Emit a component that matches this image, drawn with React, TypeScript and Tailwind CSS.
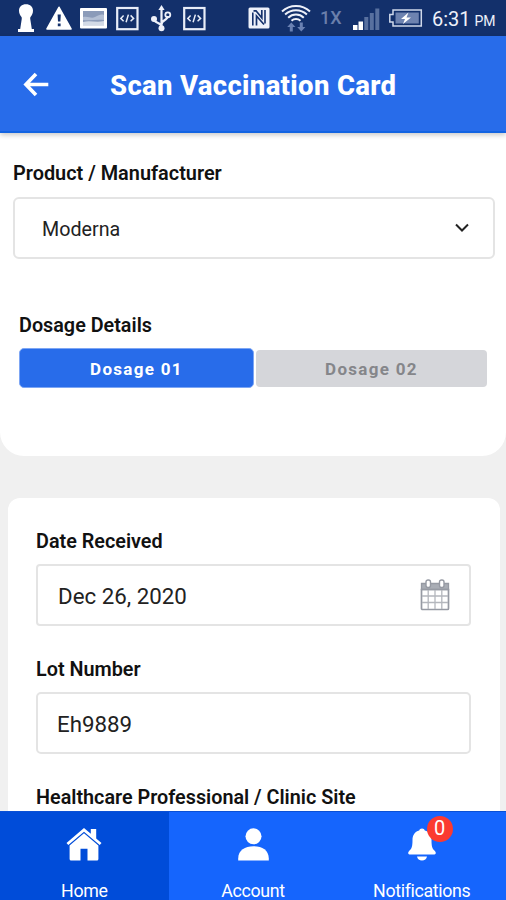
import { useState } from "react";

const dosages = ["Dosage 01", "Dosage 02"];

function CodeIcon() {
  return (
    <svg width="23" height="25" viewBox="0 0 23 25" fill="none" stroke="#e8edf8">
      <rect x="1.2" y="2" width="20.3" height="21.2" strokeWidth="2.2" />
      <path d="M7.6 9.4 4.8 12.4l2.8 2.8M14.6 9.4l3 3-3 2.8M12.4 8.6l-2.3 7.6" strokeWidth="1.5" />
    </svg>
  );
}

function StatusBar() {
  return (
    <div className="flex h-9 shrink-0 items-center bg-[#13306b] pl-[17px] text-[#eef1fa]">
      <svg width="18" height="30" viewBox="0 0 18 30" fill="#fff">
        <path d="M9 1.3C4.800 1.300 2 4 2 7.500c0 2.800 1 4.700 2.300 6.300.6.700.5 1.500.4 2.500L3.200 26H1v3h16v-3h-2.200l-1.500-9.700c-.1-1-.2-1.800.4-2.500C15 12.200 16 10.300 16 7.500c0-3.500-2.800-6.200-7-6.200Z" />
      </svg>
      <svg className="ml-[10px]" width="28" height="26" viewBox="0 0 28 26">
        <path d="M14 2.3 26 24H2Z" fill="#fff" stroke="#fff" strokeWidth="1.6" strokeLinejoin="round" />
        <path d="M12.6 9.5h3.2l-.4 7h-2.400ZM12.8 18.400h2.800v2.800h-2.800Z" fill="#13306b" />
      </svg>
      <svg className="ml-[7px]" width="28" height="22" viewBox="0 0 28 22">
        <rect x="0" y="1" width="27" height="20.5" rx="1" fill="#fff" />
        <rect x="3" y="4" width="21" height="14.3" fill="#8b9bb9" />
        <path d="M3 10c6-1 8 2 12 0s6-3 9-2v5c-7-1-14 1-21 0Z" fill="#b3bfd4" />
        <path d="M3 15c7-2 13 1 21-1v4.300H3Z" fill="#d3dae6" />
      </svg>
      <div className="ml-[8px]"><CodeIcon /></div>
      <svg className="ml-[11px]" width="23" height="28" viewBox="0 0 23 28" fill="none" stroke="#eef1fa">
        <path d="M11.5 4v20M4 15.500c0 3.500 7.500 3 7.500 7M17.800 12c-.3 5-6.300 3.500-6.300 8.500" strokeWidth="2.2" />
        <path d="M11.5 1 8.400 6h6.200Z" fill="#eef1fa" stroke="none" />
        <circle cx="4" cy="15" r="3" fill="#eef1fa" stroke="none" />
        <circle cx="17.8" cy="10.8" r="2.5" strokeWidth="1.8" />
        <circle cx="11.5" cy="24.2" r="3" fill="#eef1fa" stroke="none" />
      </svg>
      <div className="ml-[10px]"><CodeIcon /></div>

      {/* NFC */}
      <svg className="ml-[42px]" width="23" height="22" viewBox="0 0 23 22">
        <rect x="0.5" y="0.5" width="21" height="21" rx="1.5" fill="#eef1fa" />
        <path d="M4.800 18.500V5.500M17 16.500V3" stroke="#13306b" strokeWidth="1.600" />
        <path d="M8.500 18.500V9l7.500 8.500M5.500 3.800h2.500l5.800 7V3" fill="none" stroke="#13306b" strokeWidth="1.700" />
      </svg>
      <svg className="ml-[10px]" width="32" height="30" viewBox="0 0 32 30" fill="none" stroke="#eef1fa" strokeWidth="2">
        <path d="M1 8.500a20.500 20.500 0 0 1 28 0M4.100 11.600a16 16 0 0 1 21.800 0M7.200 14.700a11.300 11.300 0 0 1 15.600 0M10.500 17.800a6.700 6.700 0 0 1 9 0" />
        <path d="M10.300 19.500 6.200 24h2.600v4.500h3V24h2.600ZM20.300 28.500l-4.100-4.500h2.600v-4.500h3V24h2.600Z" fill="#6a81b3" stroke="none" />
      </svg>
      <span className="ml-[7px] w-[22px] text-[18px] font-medium leading-none text-[#6a7fab]">1X</span>
      <svg className="ml-[10px] mt-[2px]" width="28" height="24" viewBox="0 0 28 24">
        <path d="M1 18h4.500v5H1ZM6.500 14.500H11V23H6.500Z" fill="#fff" />
        <path d="M12.300 10h4v13h-4ZM17.800 6h4v17h-4ZM23.300 1.500h4V23h-4Z" fill="#58709f" />
      </svg>
      <svg className="ml-[8px]" width="35" height="20" viewBox="0 0 35 20">
        <path d="M5 2h28.300v16H5v-4H1.800V6.500H5Z" fill="none" stroke="#cfd8ea" strokeWidth="1.5" />
        <path d="M7.5 4.500h23.300v11H7.500Z" fill="#6e83b0" />
        <path d="m20.500 4.500-7.500 6.500h4L15 16l8-6.500h-4.500Z" fill="#fff" />
      </svg>
      <span className="ml-[9px] mt-[2px] whitespace-nowrap text-[20px] leading-none">
        6:31 <span className="-ml-[1px] text-[14px]">PM</span>
      </span>
    </div>
  );
}

function Header() {
  return (
    <header className="z-10 flex h-[97px] shrink-0 items-center border-b-2 border-[#1263e2] bg-[#286cea] text-white shadow-[0_2px_5px_rgba(0,0,0,0.22)]">
      <svg className="ml-[22px]" width="28" height="28" viewBox="0 0 28 28" fill="none" stroke="#fff" strokeWidth="3.6">
        <path d="M26.3 14.500H4.500M14 4 3.900 14.500 14 25" />
      </svg>
      <h1 className="ml-[60px] mt-[5px] whitespace-nowrap text-[27.5px] font-extrabold leading-none tracking-[0.33px]">Scan Vaccination Card</h1>
    </header>
  );
}

function CalendarIcon() {
  return (
    <svg width="30" height="32" viewBox="0 0 30 32" fill="none" stroke="#969aa3">
      <path d="M1.5 4.500h27v6h-27Z" fill="#a9adb5" strokeWidth="1.3" />
      <path d="M1.5 10.500h27V29.500a1 1 0 0 1-1 1h-25a1 1 0 0 1-1-1Z" strokeWidth="1.7" />
      <path d="M8.2 11v19M15 11v19M21.800 11v19M2 17h26M2 23.500h26" stroke="#b4b7bd" strokeWidth="1.3" />
      <rect x="6" y="1" width="4.5" height="7.5" rx="2" fill="#fff" strokeWidth="1.4" />
      <rect x="19.5" y="1" width="4.5" height="7.5" rx="2" fill="#fff" strokeWidth="1.4" />
    </svg>
  );
}

function BottomNav() {
  return (
    <nav className="grid h-[89px] shrink-0 grid-cols-3 border-t border-[#0a50d5] bg-[#1565fd] text-[17.8px] leading-none tracking-[-0.35px] text-white">
      <div className="flex flex-col items-center bg-[#004cd9] pt-[15px]">
        <svg width="36" height="34" viewBox="0 0 36 34" fill="#fff">
          <path d="M18 1 .5 16l1.800 2L18 4.700 33.700 18l1.800-2-5.300-4.600V2h-5.400v4.800Z" />
          <path d="M18 6.300 3.600 18.600V32a1.500 1.500 0 0 0 1.500 1.500h9.400V21.800h7v11.700h9.400a1.500 1.500 0 0 0 1.500-1.500V18.600Z" />
        </svg>
        <span className="mt-[21px]">Home</span>
      </div>
      <div className="flex flex-col items-center pt-[15px]">
        <svg width="34" height="34" viewBox="0 0 34 34" fill="#fff">
          <circle cx="17.5" cy="9.3" r="8" />
          <path d="M2.2 33.500v-2C2.200 23 9 19.200 17.500 19.200S32.800 23 32.800 31.500v2Z" />
        </svg>
        <span className="mt-[21px]">Account</span>
      </div>
      <div className="flex flex-col items-center pt-[15px]">
        <div className="relative">
          <svg width="30" height="34" viewBox="0 0 30 34" fill="#fff">
            <path d="M15 1.500c-1.500 0-2.500.8-2.800 2C7.700 4.800 5.500 8.300 5.500 13c0 6.500-.7 8.500-3.400 11-1.600 1.800-.9 3.600 1.100 3.600h23.600c2 0 2.700-1.800 1.100-3.600C25.200 21.500 24.500 19.500 24.500 13c0-4.700-2.200-8.200-6.700-9.500-.3-1.200-1.300-2-2.800-2ZM10 29.500h10c-.5 2.500-2.300 4-5 4s-4.500-1.500-5-4Z" />
          </svg>
          <span className="absolute -top-[11px] left-[20px] flex h-[26px] w-[26px] items-center justify-center rounded-full bg-[#fb3a30] pb-[2px] text-[20px] tracking-normal">0</span>
        </div>
        <span className="mt-[21px]">Notifications</span>
      </div>
    </nav>
  );
}

export default function App() {
  const [active, setActive] = useState(0);

  return (
    <div className="flex h-[900px] w-[506px] flex-col overflow-hidden bg-[#f0f0f0] font-[Roboto,sans-serif] text-[#111]">
      <StatusBar />
      <Header />

      <main className="flex min-h-0 flex-1 flex-col overflow-hidden">
        <section className="h-[323px] shrink-0 rounded-b-[24px] bg-white pl-[13px] pr-[11px] pt-[30px]">
          <label className="block text-[19.9px] font-semibold leading-[22px]">Product / Manufacturer</label>
          <div className="mt-3 flex h-[62px] items-center justify-between rounded-[6px] border-2 border-[#e4e4e4] pl-[27px] pr-[24px]">
            <span className="mt-[3px] text-[19.7px] text-[#222]">Moderna</span>
            <svg width="14" height="10" viewBox="0 0 14 10" fill="none" stroke="#222" strokeWidth="2">
              <path d="m1 1.500 6 6 6-6" />
            </svg>
          </div>

          <div className="ml-[6px] mr-2 mt-14">
            <h2 className="text-[19.8px] font-semibold leading-[22px]">Dosage Details</h2>
            <div className="mt-[11px] flex items-center gap-[2px]">
              {dosages.map((name, i) => (
                <button
                  key={name}
                  onClick={() => setActive(i)}
                  className={
                    i === active
                      ? "h-10 w-[235px] rounded-[5px] border border-[#7da6f4] bg-[#286cea] pt-[3px] text-[17px] font-bold tracking-[1.3px] text-white"
                      : "h-[37px] flex-1 rounded-[4px] bg-[#d5d6da] pt-[3px] text-[17px] font-bold tracking-[1.3px] text-[#85868a]"
                  }
                >
                  {name}
                </button>
              ))}
            </div>
          </div>
        </section>

        <section className="ml-2 mr-[6px] mt-[42px] flex-1 rounded-t-[12px] bg-white pl-7 pr-[29px] pt-[33px]">
          <label className="block text-[19.8px] font-semibold leading-[22px]">Date Received</label>
          <div className="mt-[11px] flex h-[62px] items-center justify-between rounded-[4px] border-2 border-[#e4e4e4] pl-[20px] pr-[19px]">
            <span className="mt-[3px] text-[22.3px] text-[#222]">Dec 26, 2020</span>
            <CalendarIcon />
          </div>

          <label className="mt-[33px] block text-[19.8px] font-semibold leading-[22px]">Lot Number</label>
          <div className="mt-[11px] flex h-[62px] items-center rounded-[5px] border-2 border-[#e4e4e4] pl-[19px]">
            <span className="mt-[3px] text-[22.3px] text-[#222]">Eh9889</span>
          </div>

          <label className="mt-[33px] block text-[19.8px] font-semibold leading-[22px]">Healthcare Professional / Clinic Site</label>
        </section>
      </main>

      <BottomNav />
    </div>
  );
}
